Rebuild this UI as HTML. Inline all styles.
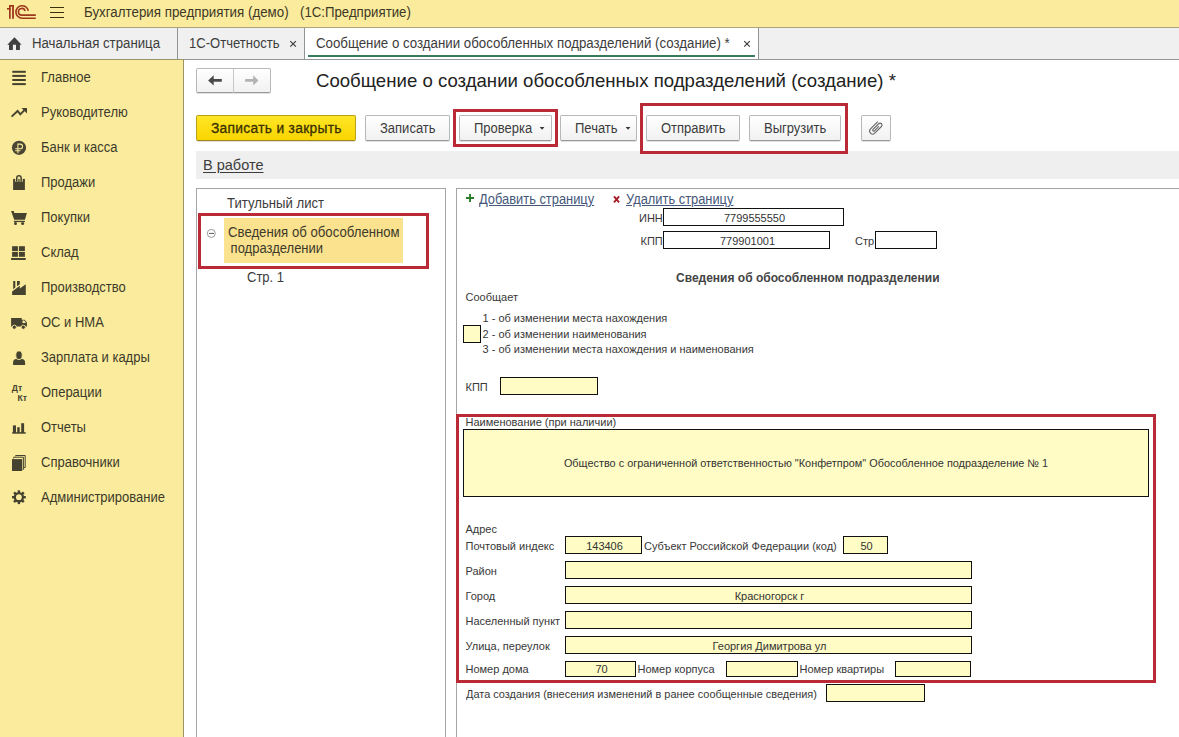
<!DOCTYPE html>
<html><head><meta charset="utf-8">
<style>
*{margin:0;padding:0;box-sizing:border-box}
html,body{width:1179px;height:737px;overflow:hidden;background:#fff;font-family:"Liberation Sans",sans-serif;color:#333}
.a{position:absolute;white-space:pre}
.m{position:absolute;white-space:pre;font-size:14px;line-height:14px;transform:scaleX(.9286);transform-origin:0 0;color:#3c3c3c}
.l{position:absolute;white-space:pre;font-size:11px;line-height:11px;color:#383838}
.c{position:absolute;white-space:pre;font-size:11px;line-height:11px;color:#333;text-align:center}
#top{position:absolute;left:0;top:0;width:1179px;height:28px;background:#fbec9d;border-bottom:1px solid #aea37a}
#tabs{position:absolute;left:0;top:28px;width:1179px;height:32px;background:#f0f0f0;border-bottom:1px solid #939799}
.sep{position:absolute;top:28px;width:1px;height:31px;background:#8f9496}
#side{position:absolute;left:0;top:59px;width:184px;height:678px;background:#fbec9d;border-right:1px solid #9b9467;border-top:1px solid #9b9467}
.si{color:#3d3a2a;left:40.6px}
.btn{position:absolute;top:115px;height:26px;border:1px solid #b8b8b8;border-bottom-color:#9a9a9a;border-radius:2px;background:linear-gradient(#ffffff,#f1f1f1);box-shadow:0 1px 0 rgba(0,0,0,.12)}
.red{position:absolute;border:3px solid #b92a36}
.fld{position:absolute;background:#fffcc5;border:1px solid #111}
.box{position:absolute;background:#fff;border:1px solid #111}
</style></head><body>

<!-- top bar -->
<div id="top"></div>
<div class="m" style="left:84px;top:5px;color:#3e3826;transform:scaleX(.952)">Бухгалтерия предприятия (демо)</div>
<div class="m" style="left:299.5px;top:5px;color:#3e3826;transform:scaleX(.944)">(1С:Предприятие)</div>

<!-- tabs -->
<div id="tabs"></div>
<div class="a" style="left:305px;top:28px;width:453px;height:31px;background:#fff"></div>
<div class="sep" style="left:177px"></div>
<div class="sep" style="left:304px"></div>
<div class="sep" style="left:758px"></div>
<div class="a" style="left:308px;top:55px;width:447px;height:2px;background:#3b7a5c"></div>
<div class="m" style="left:31.5px;top:36px;transform:scaleX(.945)">Начальная страница</div>
<div class="m" style="left:188.5px;top:36px;transform:scaleX(.932)">1С-Отчетность</div>
<div class="m" style="left:315.5px;top:36px;transform:scaleX(.948)">Сообщение о создании обособленных подразделений (создание) *</div>

<!-- sidebar -->
<div id="side"></div>
<div class="m si" style="top:70px">Главное</div>
<div class="m si" style="top:105px">Руководителю</div>
<div class="m si" style="top:140px">Банк и касса</div>
<div class="m si" style="top:175px">Продажи</div>
<div class="m si" style="top:210px">Покупки</div>
<div class="m si" style="top:245px">Склад</div>
<div class="m si" style="top:280px">Производство</div>
<div class="m si" style="top:315px">ОС и НМА</div>
<div class="m si" style="top:350px">Зарплата и кадры</div>
<div class="m si" style="top:385px">Операции</div>
<div class="m si" style="top:420px">Отчеты</div>
<div class="m si" style="top:455px">Справочники</div>
<div class="m si" style="top:490px">Администрирование</div>

<!--ICONS1-->
<svg class="a" style="left:0;top:0" width="70" height="27" viewBox="0 0 70 27">
 <g fill="#9e381c">
  <rect x="9" y="5" width="1.7" height="13.8"/>
  <rect x="12.1" y="5" width="1.8" height="13.8"/>
  <rect x="9" y="5" width="4.9" height="1.6"/>
  <rect x="7" y="8" width="3.7" height="1.6"/>
 </g>
 <g fill="none" stroke="#9e381c" stroke-width="1.6">
  <path d="M28.3 10.8 A6.25 6.25 0 1 0 22.15 18.2 H35.8"/>
  <path d="M25.05 11.0 A3.37 3.37 0 1 0 21.72 15.13 H35.8"/>
 </g>
 <g fill="#3a3010">
  <rect x="50" y="7" width="14" height="1"/>
  <rect x="50" y="12" width="14" height="1"/>
  <rect x="50" y="17" width="14" height="1"/>
 </g>
</svg>
<svg class="a" style="left:0;top:28px" width="760" height="30" viewBox="0 28 760 30">
 <path fill="#404040" d="M14.5 37.2 L21.6 44.7 H19.9 V49.9 H16 V44.7 H12.9 V49.9 H9 V44.7 H7.3 Z"/>
 <g stroke="#3a3a3a" stroke-width="1.15" fill="none">
  <path d="M290.3 41.1 L295.9 46.7 M295.9 41.1 L290.3 46.7"/>
  <path d="M744.2 41.1 L749.8 46.7 M749.8 41.1 L744.2 46.7"/>
 </g>
</svg>
<svg class="a" style="left:0;top:59px" width="40" height="460" viewBox="0 59 40 460">
 <g fill="#45422f">
  <rect x="12.3" y="70.8" width="13.5" height="2"/>
  <rect x="12.3" y="74.9" width="13.5" height="2"/>
  <rect x="12.3" y="79" width="13.5" height="2"/>
  <rect x="12.3" y="83.1" width="13.5" height="2"/>
 </g>
 <g fill="none" stroke="#45422f" stroke-width="1.9" stroke-linejoin="miter">
  <path d="M11.6 116.6 L17.6 111 L20.3 114.4 L24.5 110.2"/>
 </g>
 <path fill="#45422f" d="M21.5 107.9 H27 V113.4 Z"/>
 <circle cx="19" cy="147.8" r="7.1" fill="#4a4636"/>
 <g fill="none" stroke="#fbec9d" stroke-width="1.05">
  <path d="M17.9 153.2 V144.1 H20.2 A2.35 2.35 0 0 1 20.2 148.8 H15.3 M15.3 150.7 H20.4"/>
 </g>
 <rect x="13.1" y="178.9" width="11.8" height="11.1" fill="#45422f"/>
 <path fill="none" stroke="#fbec9d" stroke-width="3.1" d="M16.75 181.8 V178 A2.2 2.2 0 0 1 21.15 178 V181.8"/>
 <path fill="none" stroke="#45422f" stroke-width="1.5" d="M16.75 181.8 V178 A2.2 2.2 0 0 1 21.15 178 V181.8"/>
 <path fill="#45422f" d="M11.1 211 H13.8 L14.2 213 H26.9 L24.9 219.8 H14.2 Z"/>
 <rect x="13.9" y="220.8" width="11" height="1.3" fill="#45422f"/>
 <circle cx="15.5" cy="223.6" r="1.5" fill="#45422f"/>
 <circle cx="22.6" cy="223.6" r="1.5" fill="#45422f"/>
 <g fill="#45422f">
  <rect x="12.1" y="246.2" width="5.8" height="4.9"/>
  <rect x="18.9" y="246.2" width="6" height="4.9"/>
  <rect x="12.1" y="252" width="5.8" height="4.8"/>
  <rect x="18.9" y="252" width="6" height="4.8"/>
  <rect x="11.1" y="258" width="14.6" height="2"/>
 </g>
 <g fill="#45422f">
  <path d="M12.1 295 V291.6 L19.8 285.7 V288.5 L25.8 284.2 V295 Z"/>
  <path d="M13.2 281.1 H15.3 V287.6 L13.2 289.2 Z"/>
  <path d="M17 281.1 H19.8 V284.2 L17 286.3 Z"/>
 </g>
 <g fill="#45422f">
  <path d="M11.1 318.1 H21.7 V319.7 H24.6 L26.9 322.5 V326.6 H11.1 Z"/>
  <circle cx="14.3" cy="327.2" r="2.1" stroke="#fbec9d" stroke-width="0.9"/>
  <circle cx="23.3" cy="327.2" r="2.1" stroke="#fbec9d" stroke-width="0.9"/>
 </g>
 <path fill="#fbec9d" d="M22.5 320.5 H24.2 L25.7 322.5 V323 H22.5 Z"/>
 <g fill="#45422f">
  <path d="M13.1 365 V362.5 Q13.1 359.3 16.3 359 Q19 360.5 21.7 359 Q25.1 359.3 25.1 362.5 V365 Z"/>
  <ellipse cx="19" cy="355.2" rx="3.2" ry="4.3" stroke="#fbec9d" stroke-width="0.8"/>
 </g>
 <text x="11.8" y="391.4" font-family="Liberation Sans" font-weight="bold" font-size="8.6" fill="#45422f">Дт</text>
 <text x="17.4" y="400.6" font-family="Liberation Sans" font-weight="bold" font-size="8.6" fill="#45422f">Кт</text>
 <g fill="#45422f">
  <rect x="12.9" y="425.4" width="3.1" height="7.6"/>
  <rect x="17.2" y="427.2" width="2.5" height="5.8"/>
  <rect x="21.2" y="423.2" width="2.9" height="9.8"/>
  <rect x="12.2" y="432.2" width="13.5" height="1.5"/>
 </g>
 <rect x="12" y="459.1" width="10.2" height="11.9" fill="#45422f"/>
 <path fill="none" stroke="#45422f" stroke-width="1" d="M13.7 458.5 V457.2 H23.4 V469.5 H22.8 M15.6 456.3 V455.5 H25.2 V467.6 H23.9"/>
 <g transform="translate(18.9 497.2)" fill="#45422f">
  <circle r="5.2"/>
  <rect x="-1.2" y="-6.9" width="2.4" height="3" transform="rotate(0)"/><rect x="-1.2" y="-6.9" width="2.4" height="3" transform="rotate(45)"/><rect x="-1.2" y="-6.9" width="2.4" height="3" transform="rotate(90)"/><rect x="-1.2" y="-6.9" width="2.4" height="3" transform="rotate(135)"/><rect x="-1.2" y="-6.9" width="2.4" height="3" transform="rotate(180)"/><rect x="-1.2" y="-6.9" width="2.4" height="3" transform="rotate(225)"/><rect x="-1.2" y="-6.9" width="2.4" height="3" transform="rotate(270)"/><rect x="-1.2" y="-6.9" width="2.4" height="3" transform="rotate(315)"/>
  <circle r="2.9" fill="#fbec9d"/>
 </g>
</svg>
<!--/ICONS1-->

<!-- nav buttons -->
<div class="btn" style="left:196px;top:68px;width:75px;height:25px"></div>
<div class="a" style="left:233px;top:69px;width:1px;height:24px;background:#c8c8c8"></div>

<!-- title -->
<div class="a" style="left:316px;top:71px;font-size:19px;line-height:19px;color:#222;transform:scaleX(.979);transform-origin:0 0">Сообщение о создании обособленных подразделений (создание) *</div>

<!-- toolbar -->
<div class="btn" style="left:196px;width:160px;background:linear-gradient(#ffe627,#f9d500);border-color:#b9a21a;border-bottom-color:#9c8714"></div>
<div class="m" style="left:210.8px;top:121px;color:#3a3000;-webkit-text-stroke:0.3px #3a3000;letter-spacing:0.3px;transform:scaleX(.985)">Записать и закрыть</div>
<div class="btn" style="left:365px;width:85px"></div>
<div class="m" style="left:379.5px;top:121px">Записать</div>
<div class="btn" style="left:459px;width:93px"></div>
<div class="m" style="left:473.5px;top:121px">Проверка</div>
<div class="btn" style="left:560px;width:77px"></div>
<div class="m" style="left:575px;top:121px">Печать</div>
<div class="btn" style="left:646px;width:94px"></div>
<div class="m" style="left:660.5px;top:121px">Отправить</div>
<div class="btn" style="left:749px;width:92px"></div>
<div class="m" style="left:763.5px;top:121px">Выгрузить</div>
<div class="btn" style="left:861px;width:30px"></div>

<!-- status band -->
<div class="a" style="left:196px;top:151px;width:983px;height:28px;background:#efefef"></div>
<div class="a" style="left:202.5px;top:157px;font-size:15px;line-height:15px;color:#3c3c3c;text-decoration:underline;text-underline-offset:2px;transform:scaleX(.968);transform-origin:0 0">В работе</div>

<div class="red" style="left:453px;top:109px;width:105px;height:38px"></div>
<div class="red" style="left:640px;top:103px;width:208px;height:51px"></div>

<!-- left panel -->
<div class="a" style="left:196px;top:188px;width:250px;height:560px;border:1px solid #a5a5a5"></div>
<div class="m" style="left:227px;top:196px;transform:scaleX(.939)">Титульный лист</div>
<div class="a" style="left:224px;top:218px;width:179px;height:45px;background:#fbe28f"></div>
<div class="red" style="left:198px;top:213px;width:231px;height:56px"></div>
<div class="m" style="left:227.5px;top:225px;color:#3d3a2a;transform:scaleX(.9418)">Сведения об обособленном</div>
<div class="m" style="left:226.5px;top:241px;color:#3d3a2a"> подразделении</div>
<div class="m" style="left:247px;top:270px">Стр. 1</div>

<!-- right panel -->
<div class="a" style="left:456px;top:188px;width:740px;height:560px;border:1px solid #a5a5a5"></div>
<div class="m" style="left:479px;top:192px;color:#45587a;text-decoration:underline;transform:scaleX(.919)">Добавить страницу</div>
<div class="m" style="left:626px;top:192px;color:#45587a;text-decoration:underline;transform:scaleX(.919)">Удалить страницу</div>

<div class="l" style="left:639px;top:213px">ИНН</div>
<div class="box" style="left:663px;top:208px;width:181px;height:18px"></div>
<div class="c" style="left:664px;top:213px;width:181px">7799555550</div>
<div class="l" style="left:640.5px;top:236px">КПП</div>
<div class="box" style="left:663px;top:231px;width:167px;height:18px"></div>
<div class="c" style="left:664px;top:236px;width:167px">779901001</div>
<div class="l" style="left:855px;top:236px">Стр</div>
<div class="box" style="left:875px;top:231px;width:62px;height:18px"></div>

<div class="a" style="left:676px;top:272px;font-size:12px;line-height:12px;font-weight:bold;color:#444">Сведения об обособленном подразделении</div>
<div class="l" style="left:465.5px;top:292px">Сообщает</div>
<div class="l" style="left:482.5px;top:313px">1 - об изменении места нахождения</div>
<div class="l" style="left:482.5px;top:329px">2 - об изменении наименования</div>
<div class="l" style="left:482.5px;top:344px">3 - об изменении места нахождения и наименования</div>
<div class="fld" style="left:463px;top:325px;width:18px;height:18px"></div>
<div class="l" style="left:465.5px;top:382px">КПП</div>
<div class="fld" style="left:500px;top:377px;width:98px;height:18px"></div>

<div class="l" style="left:465.5px;top:417px">Наименование (при наличии)</div>
<div class="fld" style="left:463px;top:429px;width:686px;height:68px"></div>
<div class="c" style="left:462.5px;top:458px;width:686px;transform:scaleX(.99);transform-origin:50% 0">Общество с ограниченной ответственностью "Конфетпром" Обособленное подразделение № 1</div>

<div class="l" style="left:465.5px;top:524px">Адрес</div>
<div class="l" style="left:465.5px;top:541px">Почтовый индекс</div>
<div class="fld" style="left:565px;top:536px;width:77px;height:18px"></div>
<div class="c" style="left:566px;top:541px;width:77px">143406</div>
<div class="l" style="left:644px;top:541px">Субъект Российской Федерации (код)</div>
<div class="fld" style="left:843px;top:536px;width:45px;height:18px"></div>
<div class="c" style="left:844px;top:541px;width:45px">50</div>
<div class="l" style="left:465.5px;top:566px">Район</div>
<div class="fld" style="left:565px;top:561px;width:407px;height:18px"></div>
<div class="l" style="left:465.5px;top:591px">Город</div>
<div class="fld" style="left:565px;top:586px;width:407px;height:18px"></div>
<div class="c" style="left:566px;top:591px;width:407px">Красногорск г</div>
<div class="l" style="left:465.5px;top:616px">Населенный пункт</div>
<div class="fld" style="left:565px;top:611px;width:407px;height:18px"></div>
<div class="l" style="left:465.5px;top:641px">Улица, переулок</div>
<div class="fld" style="left:565px;top:636px;width:407px;height:18px"></div>
<div class="c" style="left:566px;top:641px;width:407px">Георгия Димитрова ул</div>
<div class="l" style="left:465.5px;top:664px">Номер дома</div>
<div class="fld" style="left:565px;top:661px;width:71px;height:16px"></div>
<div class="c" style="left:566px;top:664px;width:71px">70</div>
<div class="l" style="left:637.5px;top:664px">Номер корпуса</div>
<div class="fld" style="left:726px;top:661px;width:72px;height:16px"></div>
<div class="l" style="left:799.5px;top:664px">Номер квартиры</div>
<div class="fld" style="left:895px;top:661px;width:76px;height:16px"></div>
<div class="red" style="left:456px;top:414px;width:700px;height:269px"></div>
<div class="l" style="left:465.5px;top:689px;transform:scaleX(.994);transform-origin:0 0">Дата создания (внесения изменений в ранее сообщенные сведения)</div>
<div class="fld" style="left:826px;top:684px;width:99px;height:18px"></div>

<!--ICONS2-->
<svg class="a" style="left:0;top:0" width="1179" height="300" viewBox="0 0 1179 300">
 <path fill="#4a4a4a" d="M208.1 80.4 L213.7 75.3 V79 H221.8 V81.8 H213.7 V85.6 Z"/>
 <path fill="#b3b3b3" d="M258.5 80.4 L253.2 75.3 V79 H245.1 V81.8 H253.2 V85.6 Z"/>
 <path fill="#333" d="M539.7 127 H544.4 L542.05 129.8 Z"/>
 <path fill="#333" d="M625.7 127 H630.4 L628.05 129.8 Z"/>
 <g transform="translate(876.2 127.5) rotate(-45)" fill="none" stroke="#666" stroke-width="1.1">
  <path d="M5.2 -3 H-5 A3 3 0 0 0 -5 3 H4.4 A1.95 1.95 0 0 0 4.4 -0.9 H-3.6 A1 1 0 0 0 -3.6 1.1 H2.6"/>
 </g>
 <path fill="#2b7f2b" d="M469.1 194.1 H471 V197 H474 V198.9 H471 V201.9 H469.1 V198.9 H466 V197 H469.1 Z"/>
 <path stroke="#a81e2a" stroke-width="1.9" d="M614 196.3 L619.1 202.4 M619.1 196.3 L614 202.4"/>
 <circle cx="211.3" cy="233.4" r="4" fill="none" stroke="#9a9a9a" stroke-width="1"/>
 <rect x="209" y="232.9" width="5" height="1.1" fill="#666"/>
</svg>
<!--/ICONS2-->
</body></html>
